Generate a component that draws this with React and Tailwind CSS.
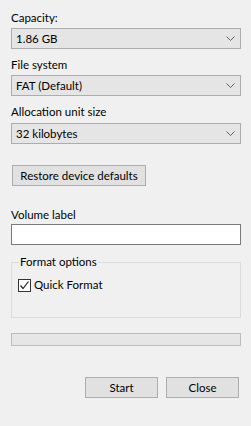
import React from "react";

const font = { fontFamily: '"Segoe UI", Lato, "Noto Sans", sans-serif' };

const Chevron = () => (
  <svg width="9" height="5" viewBox="0 0 9 5" className="shrink-0">
    <path d="M0.5 0.5 L4.5 4.5 L8.5 0.5" fill="none" stroke="#606060" strokeWidth="1" />
  </svg>
);

const Select = ({ value }) => (
  <div className="flex h-[21px] w-[230px] items-center justify-between border border-[#adadad] bg-[#e5e5e5] pl-[4px] pr-[5px] text-[11.5px] leading-[16px] text-black">
    <span>{value}</span>
    <Chevron />
  </div>
);

const Label = ({ children, className = "" }) => (
  <div className={`text-[11.5px] leading-[16px] text-black ${className}`}>{children}</div>
);

const Button = ({ children, className = "" }) => (
  <button className={`flex h-[21px] items-center justify-center border border-[#adadad] bg-[#e1e1e1] text-[11.5px] leading-[16px] text-black ${className}`}>
    {children}
  </button>
);

export default function App() {
  return (
    <div className="h-[426px] w-[251px] bg-[#f0f0f0] pl-[11px] pt-[10px]" style={font}>
      <Label>Capacity:</Label>
      <div className="mt-[2px]">
        <Select value="1.86 GB" />
      </div>

      <Label className="mt-[8px]">File system</Label>
      <div className="mt-[2px]">
        <Select value="FAT (Default)" />
      </div>

      <Label className="mt-[8px]">Allocation unit size</Label>
      <div className="mt-[3px]">
        <Select value="32 kilobytes" />
      </div>

      <Button className="ml-[1px] mt-[21px] w-[134px]">Restore device defaults</Button>

      <Label className="mt-[21px]">Volume label</Label>
      <input
        className="mt-[1px] block h-[21px] w-[230px] border border-[#7a7a7a] bg-white outline-none"
        defaultValue=""
      />

      <fieldset className="mt-[9px] h-[64px] w-[230px] border border-[#dcdcdc]">
        <legend className="ml-[7px] px-[1px] text-[11.5px] leading-[16px] text-black">Format options</legend>
        <label className="ml-[6px] mt-[7px] flex items-center gap-[3px] text-[11.5px] leading-[16px] text-black">
          <span className="flex h-[13px] w-[13px] items-center justify-center border border-[#333333] bg-white">
            <svg width="11" height="11" viewBox="0 0 11 11">
              <path d="M1.5 5.5 L4 8.5 L9.5 1.5" fill="none" stroke="#222222" strokeWidth="1.2" />
            </svg>
          </span>
          Quick Format
        </label>
      </fieldset>

      <div className="mt-[15px] h-[13px] w-[230px] border border-[#bcbcbc] bg-[#e6e6e6]" />

      <div className="mt-[31px] flex w-[228px] justify-end gap-[8px]">
        <Button className="w-[73px]">Start</Button>
        <Button className="w-[73px]">Close</Button>
      </div>
    </div>
  );
}
